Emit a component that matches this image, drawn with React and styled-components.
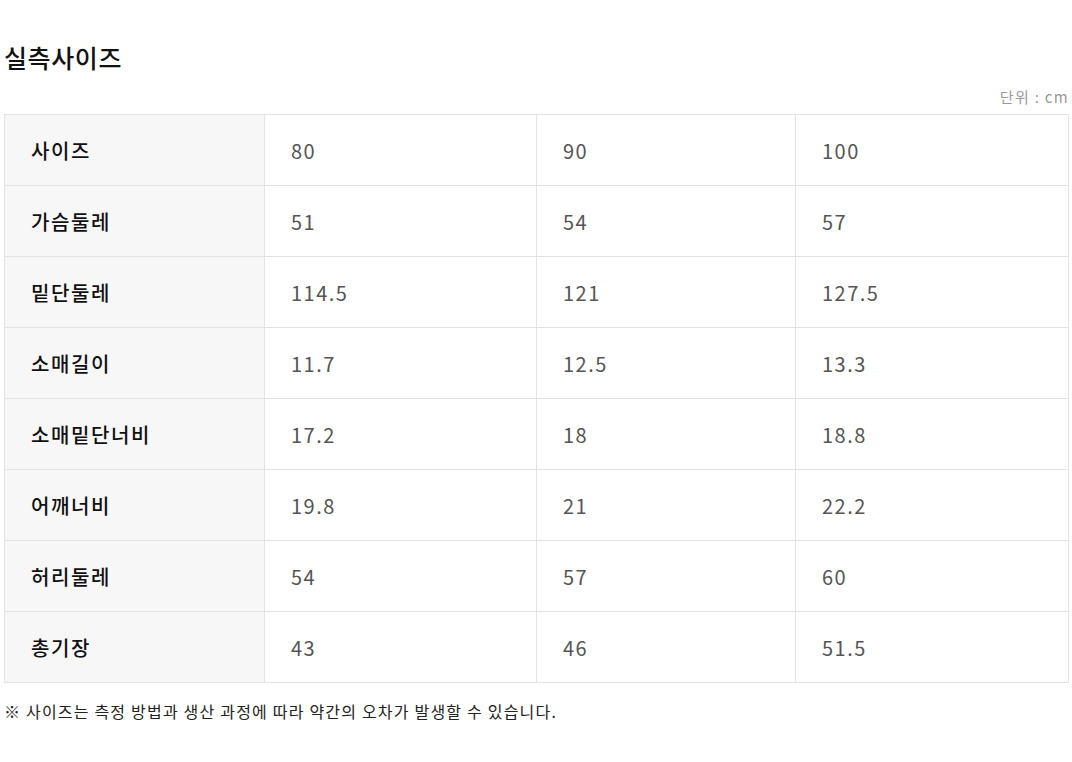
import React from "react";
import styled, { createGlobalStyle } from "styled-components";

const GlobalStyle = createGlobalStyle`
  body {
    margin: 0;
    background: #fff;
    font-family: "Noto Sans CJK KR", "Noto Sans", sans-serif;
  }
`;

const Page = styled.div`
  padding: 38px 4px 0 4px;
  width: 1064px;
`;

const Title = styled.h2`
  margin: 0;
  font-size: 25px;
  font-weight: 500;
  color: #111;
  line-height: 38px;
  letter-spacing: 0.6px;
`;

const Unit = styled.div`
  text-align: right;
  font-size: 15px;
  color: #999;
  line-height: 20px;
  margin: 11px -1px 7px 0;
  letter-spacing: 1.3px;
`;

const Table = styled.table`
  width: 1064px;
  border-collapse: collapse;
  table-layout: fixed;
  border: 1px solid #e3e3e3;
`;

const Col = styled.col`
  width: ${(p) => p.$w}px;
`;

const Row = styled.tr`
  height: 71px;
`;

const Cell = styled.td`
  border: 1px solid #e3e3e3;
  padding: 1px 0 0 26px;
  font-size: 20px;
  vertical-align: middle;
  background: ${(p) => (p.$head ? "#f7f7f7" : "#fff")};
  color: ${(p) => (p.$head ? "#111" : "#555")};
  font-weight: ${(p) => (p.$head ? 500 : 400)};
  letter-spacing: ${(p) => (p.$head ? "1.6px" : "1.5px")};
`;

const Note = styled.p`
  margin: 15px 0 0 0;
  font-size: 16px;
  color: #222;
  line-height: 26px;
  letter-spacing: 1.2px;
`;

const widths = [260, 272, 259, 273];

const rows = [
  ["사이즈", "80", "90", "100"],
  ["가슴둘레", "51", "54", "57"],
  ["밑단둘레", "114.5", "121", "127.5"],
  ["소매길이", "11.7", "12.5", "13.3"],
  ["소매밑단너비", "17.2", "18", "18.8"],
  ["어깨너비", "19.8", "21", "22.2"],
  ["허리둘레", "54", "57", "60"],
  ["총기장", "43", "46", "51.5"],
];

const App = () => {
  return (
    <Page>
      <GlobalStyle />
      <Title>실측사이즈</Title>
      <Unit>단위 : cm</Unit>
      <Table>
        <colgroup>
          {widths.map((w, i) => (
            <Col key={i} $w={w} />
          ))}
        </colgroup>
        <tbody>
          {rows.map((row) => (
            <Row key={row[0]}>
              {row.map((value, i) => (
                <Cell key={i} $head={i === 0}>
                  {value}
                </Cell>
              ))}
            </Row>
          ))}
        </tbody>
      </Table>
      <Note>※ 사이즈는 측정 방법과 생산 과정에 따라 약간의 오차가 발생할 수 있습니다.</Note>
    </Page>
  );
};

export default App;
